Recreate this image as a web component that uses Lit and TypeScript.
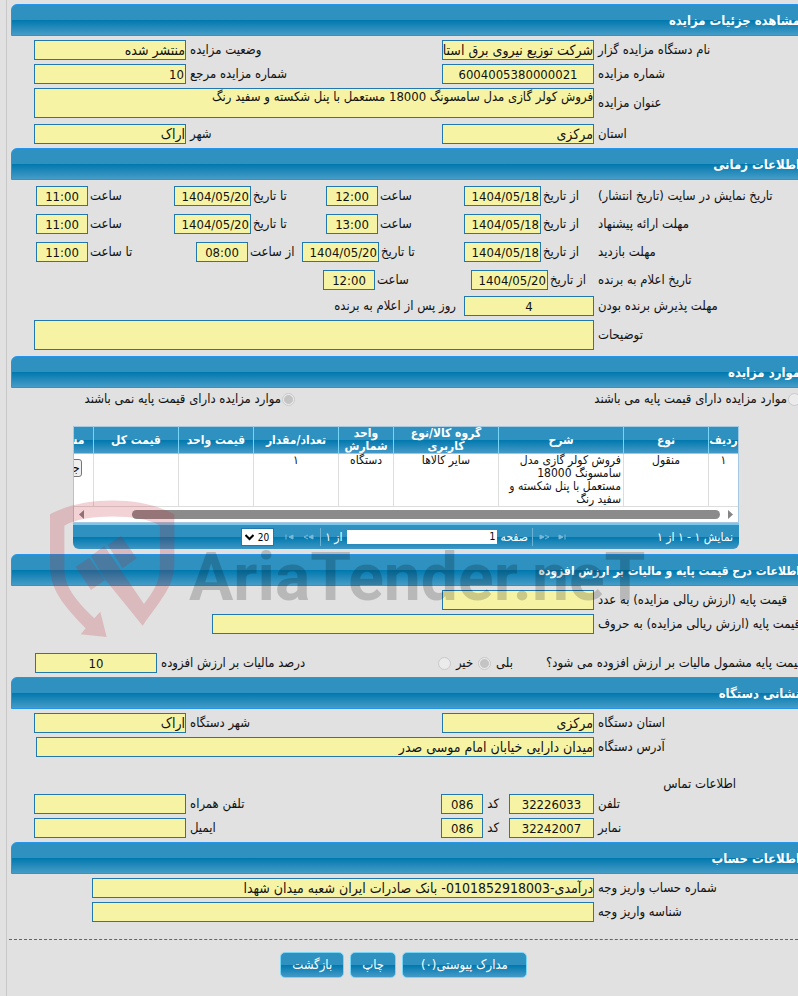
import { LitElement, html, css, svg } from "lit";
import { customElement } from "lit/decorators.js";

interface Field {
  id: string;
  label: string;
  value?: string;
  cls?: string;
}

const publishTimes: { id: string; title: string; cls: string; cells: Field[] }[] = [
  {
    id: "show", title: "تاریخ نمایش در سایت (تاریخ انتشار)", cls: "four",
    cells: [
      { id: "show-from", label: "از تاریخ", value: "1404/05/18", cls: "date" },
      { id: "show-from-h", label: "ساعت", value: "12:00", cls: "hour" },
      { id: "show-to", label: "تا تاریخ", value: "1404/05/20", cls: "date" },
      { id: "show-to-h", label: "ساعت", value: "11:00", cls: "hour" },
    ],
  },
  {
    id: "offer", title: "مهلت ارائه پیشنهاد", cls: "four",
    cells: [
      { id: "offer-from", label: "از تاریخ", value: "1404/05/18", cls: "date" },
      { id: "offer-from-h", label: "ساعت", value: "13:00", cls: "hour" },
      { id: "offer-to", label: "تا تاریخ", value: "1404/05/20", cls: "date" },
      { id: "offer-to-h", label: "ساعت", value: "11:00", cls: "hour" },
    ],
  },
  {
    id: "visit", title: "مهلت بازدید", cls: "visit",
    cells: [
      { id: "visit-from", label: "از تاریخ", value: "1404/05/18", cls: "date" },
      { id: "visit-to", label: "تا تاریخ", value: "1404/05/20", cls: "date" },
      { id: "visit-from-h", label: "از ساعت", value: "08:00", cls: "hour" },
      { id: "visit-to-h", label: "تا ساعت", value: "11:00", cls: "hour" },
    ],
  },
  {
    id: "winner", title: "تاریخ اعلام به برنده", cls: "two",
    cells: [
      { id: "winner-from", label: "از تاریخ", value: "1404/05/20", cls: "date" },
      { id: "winner-h", label: "ساعت", value: "12:00", cls: "hour" },
    ],
  },
];

const columns = [
  { name: "ردیف", cls: "c-row" },
  { name: "نوع", cls: "c-85" },
  { name: "شرح", cls: "c-desc" },
  { name: "گروه کالا/نوع کاربری", cls: "c-group" },
  { name: "واحد شمارش", cls: "c-unit" },
  { name: "تعداد/مقدار", cls: "c-85" },
  { name: "قیمت واحد", cls: "c-75" },
  { name: "قیمت کل", cls: "c-85" },
  { name: "مشاهده", cls: "c-view" },
];

@customElement("app-root")
export class AppRoot extends LitElement {
  static styles = css`
    :host {
      display: block;
      box-sizing: border-box;
      min-height: 100vh;
      overflow: hidden;
      direction: rtl;
      background: #e1e1e1;
      color: #111;
      font-family: "DejaVu Sans Condensed", "DejaVu Sans", sans-serif;
      font-size: 13px;
      line-height: 14px;
    }
    * { box-sizing: border-box; }
    .page {
      min-height: 100vh;
      margin-left: 6px;
      border-left: 1px solid #c8c8c8;
      padding: 4px 0 0 4px;
    }
    section { position: relative; }
    h2 {
      margin: 0 -5px 0 0;
      padding-right: 2px;
      height: 32px;
      border: 1px solid #2694e8;
      border-radius: 6px 6px 0 0;
      background: linear-gradient(#2e91bf 0 15px, #0078ae 15px, #469cc6);
      color: #fff;
      font-size: 13px;
      line-height: 32px;
      font-weight: bold;
      white-space: nowrap;
    }
    h2.long-title { font-size: 12px; }
    .body {
      display: flex;
      flex-direction: column;
      gap: 4px;
      padding: 4px 0;
      padding-left: 23px;
    }
    .times { padding: 6px 0 6px 25px; gap: 8px; }
    .terms { display: flex; flex-direction: column; gap: 4px; margin: -2px 0 0 -2px; }
    .row { display: flex; align-items: center; gap: 4px; min-width: 0; }
    .subject { margin-bottom: 2px; }
    .title {
      flex: none;
      display: flex;
      justify-content: flex-end;
      width: 200px;
      white-space: nowrap;
    }
    .side { flex: 1; text-align: end; white-space: nowrap; }
    input, textarea {
      display: block;
      margin: 0;
      padding: 0 1px;
      height: 20px;
      border: 1px solid #2277ad;
      border-radius: 0;
      outline: none;
      resize: none;
      overflow: hidden;
      background: #f6f4a4;
      color: #111;
      font-family: inherit;
      font-size: 13px;
      line-height: 18px;
      direction: rtl;
    }
    input.fa { font-size: 14px; padding: 0; }
    textarea { height: 30px; line-height: 16px; padding: 0; }
    .std { flex: none; width: 152px; }
    .center { text-align: center; }
    .grow { flex: 1; min-width: 0; width: 0; }
    .long { width: 382px; }
    .date { width: 77px; }
    .hour { width: 52px; text-align: center; }
    .accept { width: 130px; text-align: center; }
    .percent { width: 122px; text-align: center; margin-left: 1px; }
    .phone { width: 85px; text-align: center; }
    .code { width: 42px; text-align: center; margin-left: -1px; }
    .after { margin-right: 4px; white-space: nowrap; }
    .code-label { margin-right: 6px; }
    .cells { flex: 1; display: grid; margin-right: -4px; }
    .four { grid-template-columns: 134px 138px 152px 1fr; }
    .visit { grid-template-columns: 134px 162px 106px 1fr; }
    .two { grid-template-columns: 127px 148px 1fr; }
    .cell {
      display: flex;
      align-items: center;
      justify-content: flex-end;
      gap: 2px;
      white-space: nowrap;
    }
    .pick { display: flex; align-items: center; gap: 1px; white-space: nowrap; }
    input[type="radio"] {
      appearance: none;
      flex: none;
      width: 13px;
      height: 13px;
      padding: 0;
      border: 1px solid #c9c9c9;
      border-radius: 50%;
      background: #ebebeb;
    }
    input[type="radio"]:checked { background: radial-gradient(circle, #c4c4c4 0 4px, #ebebeb 5px); }
    .modes {
      display: grid;
      grid-template-columns: 1fr 284px;
      height: 38px;
      padding-top: 4px;
      align-items: start;
      margin-right: -3px;
    }
    .grid { margin: 0 59px 5px 61px; }
    .view {
      margin-left: 1px;
      border: 1px solid #a6c9e2;
      background: #fff;
      overflow: hidden;
    }
    table { width: 705px; table-layout: fixed; border-collapse: separate; border-spacing: 0; }
    th {
      height: 27px;
      padding: 0;
      border-left: 1px solid #77d5f7;
      border-bottom: 1px solid #77d5f7;
      background: linear-gradient(#2e91bf 0 13px, #0078ae 13px, #459ac6);
      color: #fff;
      font-size: 12px;
      line-height: 13px;
    }
    td {
      height: 53px;
      padding: 0 2px;
      border-left: 1px solid #ddd;
      border-bottom: 1px solid #ddd;
      font-size: 12px;
      line-height: 13px;
      text-align: center;
      vertical-align: top;
    }
    td.text { text-align: start; white-space: nowrap; }
    .c-row { width: 30px; }
    .c-85 { width: 85px; }
    .c-75 { width: 75px; }
    .c-desc { width: 125px; }
    .c-group { width: 105px; }
    .c-unit { width: 55px; }
    .c-view { width: 60px; }
    .detail {
      height: 18px;
      margin-top: 5px;
      padding: 0 1px;
      border: 1px solid #767676;
      border-radius: 3px;
      background: #efefef;
      font: inherit;
    }
    .scroll { display: flex; align-items: center; height: 15px; padding: 0 5px; direction: ltr; }
    .scroll svg { flex: none; width: 5px; height: 9px; }
    .thumb { flex: 1; height: 9px; margin: 0 8px 0 48px; border-radius: 5px; background: #8b8b8b; }
    .pager {
      display: flex;
      align-items: center;
      height: 26px;
      margin-left: 1px;
      padding: 0 6px;
      border-top: 2px solid #77c8ef;
      border-radius: 0 0 6px 6px;
      background: linear-gradient(#2e91bf 0 12px, #0078ae 12px, #3f97c4);
      color: #fff;
      font-size: 12px;
      white-space: nowrap;
    }
    .tools { display: flex; align-items: center; gap: 4px; margin-right: 86px; }
    .tools button { display: flex; padding: 0; border: 0; background: none; }
    .tools button svg { width: 15px; height: 10px; }
    .bar { width: 1px; height: 18px; background: #6bb2d5; }
    .pager .num { width: 150px; height: 14px; border: 0; background: #fff; font-size: 11px; line-height: 14px; }
    .pager select {
      width: 33px;
      height: 18px;
      padding: 0 4px 0 0;
      border: 1px solid #2277ad;
      border-radius: 0;
      appearance: none;
      background: #fff;
      font-family: inherit;
      font-size: 10px;
      color: #000;
      direction: rtl;
    }
    .combo { position: relative; display: flex; margin-right: 4px; }
    .combo svg { position: absolute; left: 4px; top: 6px; width: 9px; height: 7px; pointer-events: none; }
    .tax { margin-top: 15px; padding-top: 0; }
    .question { width: 252px; }
    .answers { display: flex; align-items: center; gap: 5px; margin-right: 29px; }
    .watermark {
      position: absolute;
      top: -64px;
      left: 39px;
      width: 620px;
      height: 150px;
      pointer-events: none;
      z-index: 2;
    }
    .watermark text { font-family: Roboto, "Liberation Sans", sans-serif; font-weight: bold; font-size: 66px; direction: ltr; }
    .address { margin-left: 2px; }
    .account { padding-left: 81px; }
    .contact { padding-top: 0; }
    .contact h3 { margin: 17px 62px 0 0; font-size: 13px; font-weight: normal; line-height: 12px; }
    .actions {
      display: flex;
      justify-content: center;
      gap: 6px;
      margin: 13px 0 0 -2px;
      padding-top: 12px;
      border-top: 1px dashed #2277ad;
    }
    .actions button {
      height: 26px;
      padding: 0 11px;
      border: 1px solid #77d5f7;
      border-radius: 5px;
      background: linear-gradient(#2e91bf 0 12px, #0078ae 12px, #459ac6);
      color: #fff;
      font-family: inherit;
      font-size: 13px;
      line-height: 24px;
    }
    .actions .wide { padding: 0 18px; }
  `;

  private input(f: Field) {
    const persian = /[\u0600-\u06ff]/.test(f.value ?? "") ? "fa" : "";
    return html`<input id=${f.id} class="${f.cls ?? "std"} ${persian}" type="text" readonly .value=${f.value ?? ""} />`;
  }

  private pair(a: Field, b?: Field) {
    return html`<div class="row">
      <label class="title" for=${a.id}>${a.label}</label>${this.input(a)}
      ${b ? html`<label class="side" for=${b.id}>${b.label}</label>${this.input(b)}` : ""}
    </div>`;
  }

  private phone(a: Field, code: Field, b: Field) {
    return html`<div class="row">
      <label class="title" for=${a.id}>${a.label}</label>${this.input({ ...a, cls: "phone" })}
      <label class="code-label" for=${code.id}>${code.label}</label>${this.input({ ...code, cls: "code" })}
      <label class="side" for=${b.id}>${b.label}</label>${this.input(b)}
    </div>`;
  }

  private nav(name: string, shape: unknown) {
    return html`<button type="button" aria-label=${name}>
      <svg viewBox="0 0 15 10" fill="#79b9d9" stroke="#79b9d9">${shape}</svg>
    </button>`;
  }

  render() {
    return html`<main class="page">
      <section>
        <h2>مشاهده جزئیات مزایده</h2>
        <div class="body">
          ${this.pair(
            { id: "org", label: "نام دستگاه مزایده گزار", value: "شرکت توزیع نیروی برق استان مرکزی" },
            { id: "state", label: "وضعیت مزایده", value: "منتشر شده" })}
          ${this.pair(
            { id: "no", label: "شماره مزایده", value: "6004005380000021", cls: "std center" },
            { id: "ref", label: "شماره مزایده مرجع", value: "10" })}
          <div class="row subject">
            <label class="title" for="subject">عنوان مزایده</label>
            <textarea id="subject" class="grow" readonly .value=${"فروش کولر گازی مدل سامسونگ 18000 مستعمل با پنل شکسته و سفید رنگ"}></textarea>
          </div>
          ${this.pair(
            { id: "province", label: "استان", value: "مرکزی" },
            { id: "city", label: "شهر", value: "اراک" })}
        </div>
      </section>

      <section>
        <h2>اطلاعات زمانی</h2>
        <div class="body times">
          ${publishTimes.map((r) => html`<div class="row">
            <span class="title">${r.title}</span>
            <div class="cells ${r.cls}">
              ${r.cells.map((c) => html`<div class="cell"><label for=${c.id}>${c.label}</label>${this.input(c)}</div>`)}
            </div>
          </div>`)}
          <div class="terms">
            <div class="row">
              <label class="title" for="accept">مهلت پذیرش برنده بودن</label>
              ${this.input({ id: "accept", label: "", value: "4", cls: "accept" })}
              <span class="after">روز پس از اعلام به برنده</span>
            </div>
            <div class="row">
              <label class="title" for="notes">توضیحات</label>
              <textarea id="notes" class="grow" readonly></textarea>
            </div>
          </div>
        </div>
      </section>

      <section>
        <h2>موارد مزایده</h2>
        <div class="modes">
          <label class="pick"><input type="radio" name="base" disabled />موارد مزایده دارای قیمت پایه می باشند</label>
          <label class="pick"><input type="radio" name="base" checked disabled />موارد مزایده دارای قیمت پایه نمی باشند</label>
        </div>
        <div class="grid">
          <div class="view">
            <table>
              <thead><tr>${columns.map((c) => html`<th class=${c.cls}>${c.name}</th>`)}</tr></thead>
              <tbody>
                <tr>
                  <td>۱</td>
                  <td>منقول</td>
                  <td class="text">فروش کولر گازی مدل<br />سامسونگ 18000<br />مستعمل با پنل شکسته و<br />سفید رنگ</td>
                  <td>سایر کالاها</td>
                  <td>دستگاه</td>
                  <td>۱</td>
                  <td></td>
                  <td></td>
                  <td><button class="detail" type="button">جزئیات</button></td>
                </tr>
              </tbody>
            </table>
            <div class="scroll">
              <svg viewBox="0 0 5 9" fill="#858585"><path d="M5 0v9L0 4.500z" /></svg>
              <div class="thumb"></div>
              <svg viewBox="0 0 5 9" fill="#858585"><path d="M0 0v9l5-4.500z" /></svg>
            </div>
          </div>
          <div class="pager">
            <span>نمایش ۱ - ۱ از ۱</span>
            <div class="tools">
              ${this.nav("صفحه اول", svg`<path d="M3 3v4l4-2z M9 2.500v5" />`)}
              ${this.nav("صفحه قبل", svg`<path d="M3 3v4l4-2z" /><path d="M8 3l4 2-4 2" fill="none" />`)}
              <span class="bar"></span>
              <label for="page-no">صفحه</label>
              <input id="page-no" class="num" type="text" .value=${"1"} />
              <span>از ۱</span>
              <span class="bar"></span>
              ${this.nav("صفحه بعد", svg`<path d="M12 3v4l-4-2z" /><path d="M7 3l-4 2 4 2" fill="none" />`)}
              ${this.nav("صفحه آخر", svg`<path d="M11 3v4l-4-2z M4 2.500v5" />`)}
              <span class="combo">
                <select aria-label="تعداد در صفحه"><option>20</option></select>
                <svg viewBox="0 0 9 7" fill="none" stroke="#000" stroke-width="2"><path d="M.5 1l4 4 4-4" /></svg>
              </span>
            </div>
          </div>
        </div>
      </section>

      <section>
        <h2 class="long-title">اطلاعات درج قیمت پایه و مالیات بر ارزش افزوده</h2>
        <div class="body">
          ${this.pair({ id: "base-num", label: "قیمت پایه (ارزش ریالی مزایده) به عدد" })}
          ${this.pair({ id: "base-words", label: "قیمت پایه (ارزش ریالی مزایده) به حروف", cls: "long" })}
        </div>
        <div class="body tax">
          <div class="row">
            <span class="title question">قیمت پایه مشمول مالیات بر ارزش افزوده می شود؟</span>
            <div class="answers">
              <label for="yes">بلی</label>
              <input id="yes" type="radio" name="tax" checked disabled />
              <label for="no-tax">خیر</label>
              <input id="no-tax" type="radio" name="tax" disabled />
            </div>
            <label class="side" for="percent">درصد مالیات بر ارزش افزوده</label>
            ${this.input({ id: "percent", label: "", value: "10", cls: "percent" })}
          </div>
        </div>
        <svg class="watermark" viewBox="50 490 620 150" aria-hidden="true">
          <g fill="rgb(190,30,40)" fill-opacity=".2" transform="translate(0 490) scale(.3333)">
            <path d="M150 73C250 18 425 18 523 73V220C523 285 490 320 428 407L315 268 273 198 313 168 432 342C465 297 480 275 480 225V107C425 70 250 70 193 107V230C193 290 222 325 283 385L301 365 320 441 242 433 257 415C190 345 150 300 150 225Z" />
            <path d="M227 230L268 203 315 270 273 300Z" />
            <path d="M323 165L363 137 410 205 368 235Z" />
          </g>
          <text x="189" y="600" fill="#000" fill-opacity=".18">AriaTender.neT</text>
        </svg>
      </section>

      <section>
        <h2>نشانی دستگاه</h2>
        <div class="body">
          ${this.pair(
            { id: "org-province", label: "استان دستگاه", value: "مرکزی" },
            { id: "org-city", label: "شهر دستگاه", value: "اراک" })}
          ${this.pair({ id: "address", label: "آدرس دستگاه", value: "میدان دارایی خیابان امام موسی صدر", cls: "grow address" })}
        </div>
        <div class="body contact">
          <h3>اطلاعات تماس</h3>
          ${this.phone(
            { id: "tel", label: "تلفن", value: "32226033" },
            { id: "tel-code", label: "کد", value: "086" },
            { id: "mobile", label: "تلفن همراه" })}
          ${this.phone(
            { id: "fax", label: "نمابر", value: "32242007" },
            { id: "fax-code", label: "کد", value: "086" },
            { id: "email", label: "ایمیل" })}
        </div>
      </section>

      <section>
        <h2>اطلاعات حساب</h2>
        <div class="body account">
          ${this.pair({ id: "account", label: "شماره حساب واریز وجه", value: "درآمدی-0101852918003- بانک صادرات ایران شعبه میدان شهدا", cls: "grow" })}
          ${this.pair({ id: "pay-id", label: "شناسه واریز وجه", cls: "grow" })}
        </div>
      </section>

      <div class="actions">
        <button class="wide" type="button">مدارک پیوستی(۰)</button>
        <button type="button">چاپ</button>
        <button type="button">بازگشت</button>
      </div>
    </main>`;
  }
}
